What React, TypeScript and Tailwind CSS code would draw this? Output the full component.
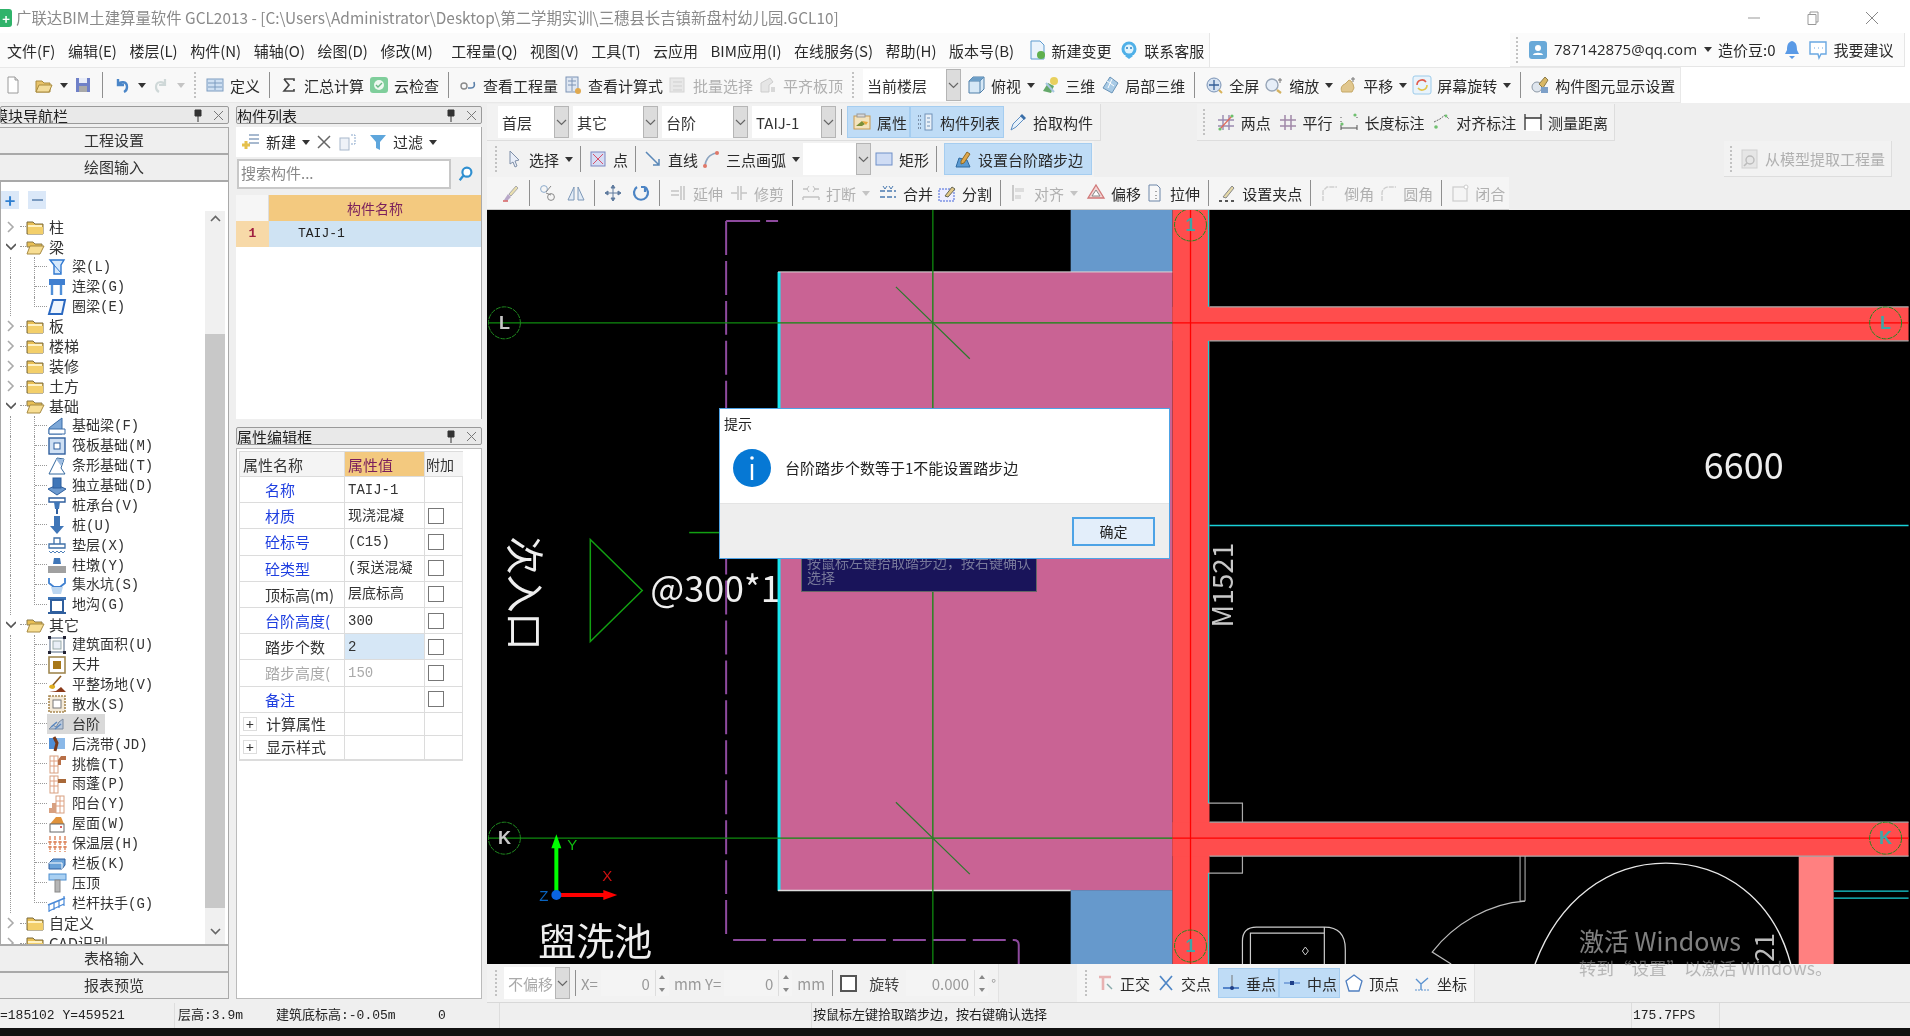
import type { ReactNode } from "react";

const cjk = { fontFamily: '"Noto Sans CJK SC", "Noto Sans", sans-serif' };
const mono = { fontFamily: '"Liberation Mono", "Noto Sans CJK SC", monospace' };

const icons: Record<string, ReactNode> = {
  doc: <><path d="M5 2h7l3 3v13H5z" fill="#fff" stroke="#9a9a9a" /><path d="M12 2v3h3" fill="#ddd" stroke="#9a9a9a" /></>,
  open: <><path d="M2 6h6l2 2h6v9H2z" fill="#e8c36a" stroke="#a98a3c" /><path d="M2 17l3-7h13l-3 7z" fill="#f3dc9a" stroke="#a98a3c" /></>,
  save: <><rect x="3" y="3" width="14" height="14" fill="#6f80c8" /><rect x="6" y="3" width="8" height="5" fill="#e9edf8" /><rect x="6" y="11" width="8" height="6" fill="#a9a9a9" /></>,
  undo: <path d="M6 4v6h6M6 10c2-4 9-4 9 2 0 2-1 4-3 5" fill="none" stroke="#4b86c8" strokeWidth="2.4" />,
  redo: <path d="M14 4v6H8M14 10c-2-4-9-4-9 2 0 2 1 4 3 5" fill="none" stroke="#cfd8d8" strokeWidth="2.2" />,
  def: <><rect x="2" y="4" width="16" height="12" fill="#cfe0f2" stroke="#7d9cc0" /><path d="M3 8h14M3 12h14M10 5v10" stroke="#7d9cc0" /></>,
  sum: <path d="M5 4h10v2M5 4l5 6-5 6h10v-2" fill="none" stroke="#444" strokeWidth="1.6" />,
  cloud: <><rect x="1" y="2" width="18" height="16" rx="3" fill="#7fce9b" /><circle cx="10" cy="10" r="5" fill="#eef8f0" /><path d="M7 10l2 2 4-4" fill="none" stroke="#6bb985" strokeWidth="1.4" /></>,
  look: <><circle cx="6" cy="11" r="3" fill="none" stroke="#8a8a8a" strokeWidth="1.4" /><path d="M13 13c3 0 4-2 3-6M10 13h3" fill="none" stroke="#5a7fa8" strokeWidth="1.6" /></>,
  calc: <><rect x="3" y="2" width="12" height="15" fill="#dfe7f2" stroke="#7d93b5" /><path d="M5 6h8M5 10h8M9 3v13" stroke="#7d93b5" /><circle cx="15" cy="16" r="3" fill="#e0a94f" /></>,
  batch: <><rect x="2" y="3" width="14" height="14" fill="#e8e8e8" stroke="#d4d4d4" /><path d="M5 7h9M5 11h9M5 15h9" stroke="#cfcfcf" /></>,
  flat: <><path d="M3 17V8l9-5 3 4-4 3v7z" fill="#e6e6e6" stroke="#cdcdcd" /><path d="M13 17v-5h4v5z" fill="#d8d8d8" /></>,
  top: <><path d="M3 6l4-4h11v12l-4 4H3z" fill="#d6e8f6" stroke="#4f7ea8" /><path d="M3 6h11v12M14 6l4-4" fill="none" stroke="#4f7ea8" /><path d="M3 6l4-4h11l-4 4z" fill="#6e9fc7" /></>,
  three: <><path d="M3 16l5-8 6 3-3 7z" fill="#64a86a" /><circle cx="14" cy="6" r="4" fill="#e8d05e" /><path d="M6 8l8 9" stroke="#a7c7e2" strokeWidth="2" /></>,
  part: <><path d="M10 2l8 6-6 10-9-5z" fill="#a9cbe6" stroke="#6a94b8" /><path d="M7 6l7 5M12 4l-4 9" stroke="#fff" /></>,
  full: <><circle cx="10" cy="10" r="7" fill="#d5e2f2" stroke="#7a93b5" /><path d="M10 5v10M5 10h10" stroke="#345f98" strokeWidth="1.3" /><path d="M15 15l3 3" stroke="#d9b35a" strokeWidth="2" /></>,
  zoom: <><circle cx="8" cy="10" r="6" fill="#e6eef8" stroke="#98a6b8" strokeWidth="1.4" /><path d="M13 15l4 3" stroke="#d3b15f" strokeWidth="2.2" /><path d="M16 3v5M14 5h4" stroke="#777" /></>,
  pan: <><path d="M4 17c-2-4 0-7 3-8l4-4 2 1 2 3 1 4-2 4z" fill="#e1c78e" stroke="#c5a866" /><path d="M15 2v5M13 4h4" stroke="#777" /></>,
  rot: <><rect x="1" y="1" width="18" height="18" rx="2" fill="#e9f3fb" stroke="#9ccbea" /><path d="M5 10a5 5 0 0 1 9-3" fill="none" stroke="#e05a4a" strokeWidth="1.6" /><path d="M15 10a5 5 0 0 1-9 3" fill="none" stroke="#e3c44a" strokeWidth="1.6" /></>,
  disp: <><circle cx="7" cy="12" r="5" fill="#dfe6ee" stroke="#8c98a6" /><path d="M9 9l6-7 3 3-5 8z" fill="#d8b765" stroke="#8a7a4a" /><rect x="11" y="12" width="7" height="6" fill="#7da0c8" /></>,
  attr: <><rect x="2" y="4" width="16" height="13" fill="#f3e3bd" stroke="#c79a55" /><path d="M4 14l6-5 3 3-3 2h-6z" fill="#7b8f38" /><path d="M10 9l6 1-2 3z" fill="#e8a83c" /><rect x="5" y="2" width="8" height="3" fill="#d9d9d9" stroke="#999" /></>,
  list: <><rect x="10" y="2" width="7" height="16" fill="#e8f0f8" stroke="#7191b8" /><path d="M12 6h3M12 10h3M12 14h3" stroke="#7191b8" /><path d="M3 4h3M3 8h3M3 12h3M3 16h3" stroke="#7b8fa8" strokeDasharray="1 1" strokeWidth="2" /></>,
  pick: <><path d="M3 18l2-6 8-8 3 3-8 8z" fill="#e7f1fa" stroke="#5e8ec2" /><path d="M12 4l2-2 4 4-2 2z" fill="#3a6ea8" /></>,
  two: <><path d="M7 3v15M13 3v15M2 8h16M2 14h16" stroke="#9a8ab0" strokeWidth="1.4" /><path d="M4 17L16 4" stroke="#e06a5a" strokeWidth="1.2" /><circle cx="4" cy="17" r="1.6" fill="#6cc06c" /><circle cx="16" cy="4" r="1.6" fill="#6cc06c" /></>,
  para: <path d="M7 3v15M13 3v15M2 8h16M2 14h16" stroke="#a088a8" strokeWidth="1.5" />,
  len: <><path d="M2 16h16M2 13v5M18 13v5" stroke="#555" /><path d="M2 9v1M2 5v1M18 5v1" stroke="#555" /><circle cx="16" cy="3" r="1.6" fill="#70c070" /><circle cx="3" cy="12" r="1.6" fill="#70c070" /></>,
  align: <><path d="M3 10l6-3 5-4 4 4" fill="none" stroke="#666" strokeDasharray="2 1" /><circle cx="5" cy="15" r="1.8" fill="#70c070" /><circle cx="15" cy="4" r="1.4" fill="#70c070" /></>,
  meas: <><rect x="3" y="6" width="15" height="13" fill="#fff" /><path d="M2 2v16M18 2v16M2 6h16" stroke="#333" strokeWidth="1.3" /></>,
  model: <><rect x="2" y="1" width="15" height="18" fill="#e6e6e6" stroke="#d0d0d0" /><circle cx="10" cy="11" r="4" fill="none" stroke="#bcbcbc" strokeWidth="1.4" /><path d="M7 14l-3 3" stroke="#bcbcbc" strokeWidth="1.6" /></>,
  cursor: <path d="M6 2l9 9-4 1 2 5-2 1-2-5-3 2z" fill="#e9eef8" stroke="#7f8fa8" />,
  point: <><rect x="3" y="3" width="14" height="14" fill="#d5dcf4" stroke="#7a86c0" /><path d="M5 5l10 10M15 5L5 15" stroke="#d8506a" /></>,
  line: <path d="M3 3l13 13M16 10v6h-6" fill="none" stroke="#5a88b8" strokeWidth="1.5" />,
  arc: <><path d="M4 18c0-7 4-13 12-14" fill="none" stroke="#8da5c0" strokeWidth="1.6" /><circle cx="16" cy="4" r="2" fill="#e07868" /><circle cx="4" cy="17" r="2" fill="#e07868" /></>,
  rect: <rect x="2" y="4" width="16" height="12" fill="#cfdcf4" stroke="#6f8fc8" />,
  step: <><path d="M3 18l3-9 8 2 3 7z" fill="#5a9ad2" stroke="#2e6aa0" /><path d="M8 12l6-9 3 2-6 9-3 1z" fill="#e0a74a" stroke="#8a6a2a" /></>,
  brush: <><path d="M3 17l4-6 3 3-4 4z" fill="#b8a8c8" /><path d="M8 11l7-8 2 2-7 8z" fill="#eadfae" stroke="#aaa" /><path d="M2 18h5" stroke="#d86a6a" strokeWidth="1.6" /></>,
  copy: <><circle cx="6" cy="6" r="3.4" fill="none" stroke="#8eaccc" /><circle cx="13" cy="14" r="3.4" fill="none" stroke="#8a8a8a" /><path d="M8 9l5-6M8 10l5 2" stroke="#888" /></>,
  mirror: <><path d="M8 4v13H2zM12 4v13h6z" fill="#e3ecf6" stroke="#7d98b8" /></>,
  move: <path d="M10 2v16M2 10h16M10 2L8 5h4zM10 18l-2-3h4zM2 10l3-2v4zM18 10l-3-2v4z" fill="#5f7b9e" stroke="#5f7b9e" />,
  rotate: <path d="M14 4a7 7 0 1 1-8 0M14 4v5M14 4l-4 0" fill="none" stroke="#4c84c4" strokeWidth="2.2" />,
  ext: <path d="M3 8h8M3 12h8M13 3v14M16 3v14" stroke="#c4c4c4" strokeWidth="1.5" />,
  trim: <path d="M2 10h6M12 10h6M9 3v14M12 3v14" stroke="#c4c4c4" strokeWidth="1.5" />,
  brk: <><path d="M2 6h5M13 6h5M2 14h16M2 14v3M18 14v3" stroke="#c2c2c2" strokeWidth="1.4" /><path d="M8 3l-2 3 2 3M12 3l2 3-2 3" fill="none" stroke="#c2c2c2" /></>,
  merge: <><path d="M2 8h16M2 14h16" stroke="#4a7ab0" strokeWidth="1.4" strokeDasharray="5 2" /><path d="M5 3l2 3 2-3M11 3l2 3 2-3" fill="none" stroke="#4a7ab0" /></>,
  split: <><rect x="2" y="6" width="15" height="12" fill="#eef" stroke="#4466d8" strokeDasharray="2 1" /><path d="M8 13l7-9 3 2-7 8z" fill="#e2c886" stroke="#665" /></>,
  alignL: <><path d="M4 2v16" stroke="#bbb" strokeWidth="1.5" /><rect x="6" y="5" width="9" height="4" fill="#ddd" /><rect x="6" y="12" width="6" height="4" fill="#ddd" /></>,
  offset: <><path d="M10 2l8 13H2z" fill="#f3d5d5" stroke="#d07878" strokeWidth="1.3" /><path d="M10 7l4 6H6z" fill="#fff" stroke="#888" /></>,
  stretch: <><path d="M4 2h8l3 3v13H4z" fill="#f8f8f8" stroke="#6d86a8" /><path d="M11 8v1M11 12v1M11 15v1" stroke="#555" /></>,
  grip: <><path d="M2 18h3M8 18h3M14 18h3" stroke="#555" strokeWidth="1.8" /><path d="M6 14L15 3l2 2-8 10z" fill="#e5d9a8" stroke="#888" /></>,
  chamfer: <path d="M4 18V8l4-4h10" fill="none" stroke="#cfcfcf" strokeWidth="1.4" strokeDasharray="5 1" />,
  round: <path d="M4 18V10c0-3 3-6 6-6h8" fill="none" stroke="#cfcfcf" strokeWidth="1.4" strokeDasharray="5 1" />,
  close: <><rect x="3" y="4" width="14" height="14" fill="none" stroke="#cfcfcf" strokeWidth="1.3" /><circle cx="16" cy="4" r="2" fill="#fff" stroke="#ccc" /></>,
  ortho: <><path d="M4 4h12M8 4v13" stroke="#e8b2b2" strokeWidth="2.6" /><path d="M12 11l5 5" stroke="#8aa" strokeWidth="1.4" /></>,
  cross: <path d="M4 3l12 14M16 3L4 17" stroke="#4f86c6" strokeWidth="1.7" />,
  perp: <><path d="M2 15h16" stroke="#3a6fc0" strokeWidth="1.6" /><path d="M11 2v13" stroke="#777" /><circle cx="11" cy="15" r="2" fill="#1f3f88" /></>,
  mid: <><path d="M2 10h16" stroke="#6f9ad8" strokeWidth="1.6" /><rect x="8" y="8" width="4" height="4" fill="#1f3f88" /></>,
  vert: <path d="M10 2l8 6-3 10H5L2 8z" fill="#fff" stroke="#4f7fc0" strokeWidth="1.3" />,
  coord: <><path d="M9 17v-6L4 6M9 11l7-6" fill="none" stroke="#5a92d0" strokeWidth="1.4" /><path d="M3 17h14" stroke="#5a92d0" strokeDasharray="2 1" /></>,
  addc: <><path d="M8 3h10M8 7h10M8 11h10" stroke="#8aa2c0" strokeWidth="1.3" /><path d="M5 9v8M1 13h8" stroke="#e5c04c" strokeWidth="3" /></>,
  copyc: <><rect x="2" y="6" width="9" height="12" fill="#eef2f8" stroke="#a8b8cc" /><path d="M13 3h4v9h-4" fill="none" stroke="#8aa8cc" strokeDasharray="2 1" /></>,
  filter: <path d="M2 3h16l-6 7v8l-4-2v-6z" fill="#5ea6dc" />,
  search: <><circle cx="11" cy="8" r="5" fill="#fff" stroke="#2f8fd0" strokeWidth="2.4" /><path d="M7 12l-4 5" stroke="#2f8fd0" strokeWidth="2.6" /></>,
  newdoc: <><path d="M4 1h9l4 4v14H4z" fill="#eaf3fb" stroke="#5d9bd0" /><circle cx="14" cy="15" r="4" fill="#5fb04e" /></>,
  service: <><circle cx="10" cy="9" r="7.5" fill="#4fb0e8" /><circle cx="10" cy="9" r="4.5" fill="#dff3fd" /><circle cx="8" cy="8" r="1" fill="#2a80c0" /><circle cx="12" cy="8" r="1" fill="#2a80c0" /><path d="M6 16l4 3 4-3" fill="#4fb0e8" /></>,
  user: <><rect x="1" y="1" width="18" height="18" rx="3" fill="#69a9d8" /><circle cx="10" cy="8" r="3" fill="#fff" /><path d="M5 15c0-3 10-3 10 0z" fill="#fff" /></>,
  bell: <path d="M10 1c-4 1-5 4-5 9l-2 4h14l-2-4c0-5-1-8-5-9zM7 16h6l-3 3z" fill="#5a9ae6" />,
  talk: <><path d="M2 2h16v12H13l-2 4-1-4H2z" fill="#fff" stroke="#6aa8e2" strokeWidth="1.4" /><path d="M6 8h1M10 8h1M14 8h1" stroke="#6aa8e2" /></>,
  folder: <><path d="M2 5h6l2 2h8v10H2z" fill="#e8bf55" stroke="#7b6a3c" /><path d="M3 10h15v7H3z" fill="#f3cf6a" /><path d="M3 8h14v2H3z" fill="#fff2c4" /></>,
  folderOpen: <><path d="M2 5h6l2 2h7v3H2z" fill="#e8bf55" stroke="#8b7a4a" /><path d="M2 17l3-8h14l-4 8z" fill="#f7dd92" stroke="#a68a42" /></>,
  b1: <><path d="M3 3h14l-3 5v9H7V8z" fill="#d5e8fb" stroke="#2f78d0" strokeWidth="1.4" /><path d="M7 8l7 8" stroke="#2f78d0" /></>,
  b2: <><rect x="2" y="2" width="16" height="6" fill="#3f7fd0" /><path d="M5 8v10M14 8v10" stroke="#4f8fd8" strokeWidth="2.4" /></>,
  b3: <path d="M6 3h12l-3 14H2z" fill="#eef5fd" stroke="#2a68c0" strokeWidth="2" />,
  b4: <><path d="M2 18v-6l5-4 8-6v16z" fill="#7da8d8" stroke="#3a6ca8" /><path d="M2 13h16v5H2z" fill="#fff" stroke="#3a6ca8" /></>,
  b5: <><rect x="2" y="2" width="16" height="16" fill="#cfe0f4" stroke="#2f5f9e" strokeWidth="1.4" /><rect x="7" y="7" width="6" height="6" fill="#fff" stroke="#2f5f9e" /></>,
  b6: <><path d="M2 18l3-6 5-10 7 1-3 9 4 6z" fill="#fff" stroke="#34689e" /><path d="M9 3l8 0-3 7z" fill="#9cbbe0" /></>,
  b7: <><path d="M1 13l9-4 9 4-9 6z" fill="#6c9ad0" stroke="#2f5f9e" /><rect x="6" y="2" width="8" height="10" fill="#3f76b8" stroke="#2f5f9e" /></>,
  b8: <><path d="M2 3h16v4H2z" fill="#fff" stroke="#2f5f9e" strokeWidth="1.4" /><path d="M7 7h6l-1 7H8z" fill="#3f76b8" /><path d="M10 14v5" stroke="#2f5f9e" strokeWidth="2" /></>,
  b9: <><rect x="7" y="1" width="6" height="10" fill="#3f76b8" /><path d="M3 11h14l-7 8z" fill="#3f76b8" /></>,
  b10: <><path d="M7 3h6v6H7zM2 9h16v4H2z" fill="#fff" stroke="#3f70a8" strokeWidth="1.3" /><path d="M2 16l2 2 2-2 2 2 2-2 2 2 2-2 2 2 2-2" fill="none" stroke="#4f80b8" /></>,
  b11: <><path d="M7 3h6l1 6H6z" fill="#3f76b8" /><rect x="1" y="11" width="18" height="7" fill="#a0a0a0" /></>,
  b12: <><path d="M2 3v5l5 4h6l5-4V3" fill="none" stroke="#3f80d0" strokeWidth="1.8" /><path d="M4 12h12l-2 7H6z" fill="#bcd6f0" /></>,
  b13: <><rect x="1" y="2" width="18" height="3" fill="#3f76b8" /><rect x="4" y="5" width="12" height="12" fill="#fff" stroke="#2f5f9e" strokeWidth="2" /><rect x="1" y="17" width="18" height="2" fill="#2f5f9e" /></>,
  c1: <><rect x="3" y="3" width="14" height="14" fill="#fff" stroke="#7a8aa0" strokeWidth="1.3" /><rect x="6" y="6" width="8" height="8" fill="#e8eef6" stroke="#9aa" /><rect x="1" y="1" width="3" height="3" fill="#223" /><rect x="16" y="1" width="3" height="3" fill="#223" /><rect x="1" y="16" width="3" height="3" fill="#223" /><rect x="16" y="16" width="3" height="3" fill="#223" /></>,
  c2: <><rect x="2" y="2" width="16" height="16" fill="#fff" stroke="#a08850" strokeWidth="1.6" /><rect x="6" y="6" width="8" height="8" fill="#a87818" /></>,
  c3: <><path d="M2 13c1-3 5-3 6-1s-3 5-6 1z" fill="#e0b020" /><path d="M6 11l8-9" stroke="#8a5a20" strokeWidth="1.6" /><path d="M9 17l5-4 5 5H2z" fill="#8a3a1a" /></>,
  c4: <><rect x="2" y="2" width="16" height="16" fill="#f4ead8" stroke="#a88850" strokeWidth="1.6" strokeDasharray="2 1" /><rect x="6" y="6" width="8" height="8" fill="#fff" stroke="#777" /></>,
  c5: <><path d="M2 15l4-4 3 2 3-5 4-3v10H2z" fill="#b8c8dc" stroke="#7a8aa0" /><path d="M4 13l6-5M8 15l6-5" stroke="#5a88c0" strokeWidth="1.5" /></>,
  c6: <><rect x="2" y="4" width="8" height="11" fill="#4f8fd8" /><rect x="10" y="4" width="8" height="11" fill="#8ab8e8" /><path d="M7 3l3 6-2 8" stroke="#7a3a1a" strokeWidth="3" fill="none" /></>,
  c7: <><rect x="3" y="2" width="8" height="17" fill="#fff" stroke="#d8a080" /><path d="M3 7h8M3 12h8M7 2v17" stroke="#e0a080" /><path d="M11 6l3-4h5v4h-5v5h-3z" fill="#b87048" /></>,
  c8: <><rect x="3" y="2" width="8" height="17" fill="#fff" stroke="#d8a080" /><path d="M3 7h8M3 12h8M7 2v17" stroke="#e0a080" /><rect x="11" y="5" width="8" height="4" fill="#a86838" /></>,
  c9: <><rect x="9" y="2" width="8" height="17" fill="#fff" stroke="#d8a080" /><path d="M9 7h8M9 12h8M13 2v17" stroke="#e0a080" /><path d="M2 14h7v5H2zM5 9h4v5H5z" fill="#d8a080" /></>,
  c10: <><path d="M3 10l6-7h5l3 7z" fill="#e0923a" /><rect x="3" y="10" width="14" height="8" fill="#fff" stroke="#666" /><circle cx="14" cy="13" r="1" fill="#c33" /></>,
  c11: <path d="M3 2v16M8 2v16M13 2v16M18 2v16M1 8h19M1 13h19" stroke="#d87040" strokeWidth="1.2" strokeDasharray="4 1" fill="none" />,
  c12: <><path d="M2 10l4-4h12v6l-3 4H2z" fill="#6aa2d8" stroke="#2f5f9e" /><path d="M2 10h13v6" fill="none" stroke="#fff" /></>,
  c13: <><rect x="2" y="1" width="17" height="6" fill="#a9d0f2" stroke="#4f8fd0" /><rect x="8" y="7" width="5" height="12" fill="#b5b5b5" stroke="#888" /></>,
  c14: <><path d="M1 12l17-7" stroke="#4a8ad8" strokeWidth="1.6" /><path d="M2 19v-7M7 17V9M12 15V7M17 13V3M2 18l15-7" stroke="#4a8ad8" strokeWidth="1.2" fill="none" /></>,
};

function Ic({ n, s = 20 }: { n: string; s?: number }) {
  return (
    <svg viewBox="0 0 20 20" width={s} height={s} className="shrink-0">
      {icons[n]}
    </svg>
  );
}

function Caret({ dim }: { dim?: boolean }) {
  return <span className={`ml-[1px] w-0 h-0 border-x-[4px] border-x-transparent border-t-[5px] ${dim ? "border-t-[#c4c4c4]" : "border-t-[#333]"}`} />;
}

function Sep() {
  return <div className="w-px h-[26px] bg-[#8f8f8f] shrink-0 mx-[4px]" />;
}

function Grip() {
  return <div className="w-0 h-[26px] border-l-2 border-dotted border-[#c2c2c2] shrink-0 mx-[4px]" />;
}

function Btn({ i, t, caret, on, dim, className = "" }: { i: string; t?: string; caret?: boolean; on?: boolean; dim?: boolean; className?: string }) {
  return (
    <div className={`flex items-center gap-[5px] h-[30px] shrink-0 whitespace-nowrap ${on ? "bg-[#bfdcf6] border border-[#a5cdf0]" : ""} ${dim ? "text-[#b0b0b0]" : "text-[#2a2a2a]"} ${className}`}>
      <Ic n={i} />
      {t && <span>{t}</span>}
      {caret && <Caret dim={dim} />}
    </div>
  );
}

function Combo({ t, w, dim }: { t?: string; w: string; dim?: boolean }) {
  return (
    <div className={`flex items-center h-[32px] bg-white shrink-0 pl-[4px] ${w}`}>
      <span className={`flex-1 ${dim ? "text-[#aaa]" : "text-[#333]"}`}>{t}</span>
      <span className="w-[15px] h-[32px] bg-[#dcdcdc] border border-[#b5b5b5] flex items-center justify-center">
        <svg width="11" height="7" viewBox="0 0 11 7"><path d="M1 1l4.5 4.5L10 1" fill="none" stroke="#666" strokeWidth="1.2" /></svg>
      </span>
    </div>
  );
}

function Panel({ t, clip }: { t: string; clip?: boolean }) {
  return (
    <div className="flex items-center h-[18px] bg-[#e9e9e9] border border-[#9a9a9a] rounded-[2px] text-[15px] leading-none text-[#222] overflow-hidden shrink-0">
      <span className={`flex-1 whitespace-nowrap ${clip ? "-ml-[8px]" : ""}`}>{t}</span>
      <svg width="10" height="13" viewBox="0 0 10 13" className="mr-[10px]"><path d="M2 1h6v6H2zM5 7v6" fill="#333" stroke="#333" /></svg>
      <svg width="11" height="11" viewBox="0 0 11 11" className="mr-[4px]"><path d="M1 1l9 9M10 1l-9 9" stroke="#777" /></svg>
    </div>
  );
}

function NavButton({ t }: { t: string }) {
  return <div className="h-[27px] shrink-0 bg-[#efefef] border-y border-r border-[#a9a9a9] flex items-center justify-center text-[15px] text-[#333]">{t}</div>;
}

type Row = { t: string; i?: string; kind?: "closed" | "open"; last?: boolean; sel?: boolean };

const tree: Row[] = [
  { t: "柱", kind: "closed" },
  { t: "梁", kind: "open" },
  { t: "梁(L)", i: "b1" },
  { t: "连梁(G)", i: "b2" },
  { t: "圈梁(E)", i: "b3", last: true },
  { t: "板", kind: "closed" },
  { t: "楼梯", kind: "closed" },
  { t: "装修", kind: "closed" },
  { t: "土方", kind: "closed" },
  { t: "基础", kind: "open" },
  { t: "基础梁(F)", i: "b4" },
  { t: "筏板基础(M)", i: "b5" },
  { t: "条形基础(T)", i: "b6" },
  { t: "独立基础(D)", i: "b7" },
  { t: "桩承台(V)", i: "b8" },
  { t: "桩(U)", i: "b9" },
  { t: "垫层(X)", i: "b10" },
  { t: "柱墩(Y)", i: "b11" },
  { t: "集水坑(S)", i: "b12" },
  { t: "地沟(G)", i: "b13", last: true },
  { t: "其它", kind: "open" },
  { t: "建筑面积(U)", i: "c1" },
  { t: "天井", i: "c2" },
  { t: "平整场地(V)", i: "c3" },
  { t: "散水(S)", i: "c4" },
  { t: "台阶", i: "c5", sel: true },
  { t: "后浇带(JD)", i: "c6" },
  { t: "挑檐(T)", i: "c7" },
  { t: "雨蓬(P)", i: "c8" },
  { t: "阳台(Y)", i: "c9" },
  { t: "屋面(W)", i: "c10" },
  { t: "保温层(H)", i: "c11" },
  { t: "栏板(K)", i: "c12" },
  { t: "压顶", i: "c13" },
  { t: "栏杆扶手(G)", i: "c14", last: true },
  { t: "自定义", kind: "closed" },
  { t: "CAD识别", kind: "closed" },
];

function TreeRow({ r }: { r: Row }) {
  if (r.kind) {
    return (
      <div className="flex items-center h-[19.9px] shrink-0">
        <svg width="10" height="12" viewBox="0 0 10 12" className="ml-[5px] shrink-0">
          {r.kind === "closed" ? <path d="M2 1l5 5-5 5" fill="none" stroke="#aaa" strokeWidth="1.6" /> : <path d="M0 3l5 5 5-5" fill="none" stroke="#555" strokeWidth="1.6" />}
        </svg>
        <div className="w-[6px] ml-[4px] border-t border-dotted border-[#999]" />
        <div className="ml-[-1px]"><Ic n={r.kind === "closed" ? "folder" : "folderOpen"} /></div>
        <span className="ml-[4px] text-[15px] text-[#333]">{r.t}</span>
      </div>
    );
  }
  return (
    <div className="flex items-center h-[19.9px] shrink-0 pl-[9px]">
      <div className="w-[24px] h-full border-l border-dotted border-[#999] shrink-0" />
      {r.last ? (
        <div className="w-[13px] h-full shrink-0"><div className="h-1/2 border-l border-b border-dotted border-[#999]" /></div>
      ) : (
        <div className="w-[13px] h-full border-l border-dotted border-[#999] shrink-0"><div className="h-1/2 border-b border-dotted border-[#999]" /></div>
      )}
      <div className={`flex items-center h-full whitespace-nowrap ${r.sel ? "bg-[#d9d9d9]" : ""}`}>
        <Ic n={r.i!} />
        <span className="ml-[5px] pr-[5px] pt-[2px] text-[14px] text-[#333]" style={mono}>{r.t}</span>
      </div>
    </div>
  );
}

function LeftNav() {
  return (
    <div className="w-[231px] shrink-0 flex flex-col pt-[3px] pr-[2px]">
      <Panel t="模块导航栏" clip />
      <div className="h-[3px]" />
      <NavButton t="工程设置" />
      <NavButton t="绘图输入" />
      <div className="flex-1 min-h-0 flex flex-col bg-white border border-[#a9a9a9] overflow-hidden">
        <div className="h-[29px] shrink-0 flex items-center gap-[9px] pt-[6px]">
          <span className="w-[18px] h-[18px] bg-[#dbe8f8] flex items-center justify-center text-[#2f7fd0] font-bold text-[18px] leading-none">+</span>
          <span className="w-[18px] h-[18px] bg-[#dbe8f8] flex items-center justify-center"><span className="w-[11px] h-[2px] bg-[#7a9ac0]" /></span>
        </div>
        <div className="flex-1 min-h-0 flex">
          <div className="flex-1 min-w-0 pt-[6px] overflow-hidden flex flex-col">
            {tree.map((r) => <TreeRow key={r.t} r={r} />)}
          </div>
          <div className="w-[20px] shrink-0 mr-[3px] bg-[#f0f0f0] flex flex-col">
            <div className="h-[123px] shrink-0 pt-[4px] flex justify-center">
              <svg width="11" height="7" viewBox="0 0 11 7"><path d="M1 6l4.500-4.500L10 6" fill="none" stroke="#666" strokeWidth="1.6" /></svg>
            </div>
            <div className="flex-1 bg-[#c8c8c8]" />
            <div className="h-[36px] shrink-0 pt-[20px] flex justify-center">
              <svg width="11" height="7" viewBox="0 0 11 7"><path d="M1 1l4.500 4.500L10 1" fill="none" stroke="#666" strokeWidth="1.6" /></svg>
            </div>
          </div>
        </div>
      </div>
      <NavButton t="表格输入" />
      <NavButton t="报表预览" />
      <div className="h-[4px]" />
    </div>
  );
}

const props = [
  { n: "名称", v: "TAIJ-1", c: "text-[#1f3fe0]", noBox: true },
  { n: "材质", v: "现浇混凝", c: "text-[#1f3fe0]" },
  { n: "砼标号", v: "(C15)", c: "text-[#1f3fe0]" },
  { n: "砼类型", v: "(泵送混凝", c: "text-[#1f3fe0]" },
  { n: "顶标高(m)", v: "层底标高", c: "text-[#333]" },
  { n: "台阶高度(", v: "300", c: "text-[#1f3fe0]" },
  { n: "踏步个数", v: "2", c: "text-[#333]", sel: true },
  { n: "踏步高度(", v: "150", c: "text-[#aaa]", gray: true },
  { n: "备注", v: "", c: "text-[#1f3fe0]" },
];

function PropRow({ p }: { p: (typeof props)[number] }) {
  return (
    <div className="grid grid-cols-[105px_80px_38px] h-[26.2px] border-b border-[#dcdcdc] text-[14px] leading-none">
      <div className={`flex items-center pl-[25px] border-r border-[#dcdcdc] whitespace-nowrap overflow-hidden text-[15px] ${p.c}`}>{p.n}</div>
      <div className={`flex items-center pl-[3px] border-r border-[#dcdcdc] whitespace-nowrap overflow-hidden ${p.sel ? "bg-[#d6e7f6]" : ""} ${p.gray ? "text-[#aaa]" : "text-[#333]"}`} style={mono}>{p.v}</div>
      <div className="flex items-center pl-[3px]">{!p.noBox && <span className="w-[16px] h-[16px] border border-[#777] bg-white" />}</div>
    </div>
  );
}

function GroupRow({ t }: { t: string }) {
  return (
    <div className="grid grid-cols-[105px_80px_38px] h-[23.5px] border-b border-[#dcdcdc] text-[15px] text-[#333]">
      <div className="flex items-center pl-[3px] gap-[9px] border-r border-[#dcdcdc] whitespace-nowrap">
        <span className="w-[14px] h-[14px] border border-[#ddd] flex items-center justify-center text-[14px] leading-none">+</span>
        {t}
      </div>
      <div className="border-r border-[#dcdcdc]" />
      <div />
    </div>
  );
}

function MidPanels() {
  return (
    <div className="w-[256px] shrink-0 flex flex-col pt-[3px] pl-[5px] pr-[5px]">
      <Panel t="构件列表" />
      <div className="h-[3px]" />
      <div className="h-[292px] shrink-0 bg-white border-r border-[#aaa] flex flex-col">
        <div className="h-[30px] shrink-0 flex items-center gap-[6px] pl-[5px] text-[15px] text-[#333]">
          <Btn i="addc" t="新建" caret className="gap-[2px]" />
          <svg width="16" height="16" viewBox="0 0 16 16"><path d="M2 2l12 12M14 2L2 14" stroke="#666" strokeWidth="1.5" /></svg>
          <Ic n="copyc" />
          <Btn i="filter" t="过滤" caret className="gap-[2px] ml-[4px]" />
        </div>
        <div className="h-[33px] shrink-0 bg-[#efefef] flex items-center">
          <div className="w-[214px] h-[30px] ml-[1px] bg-white border-2 border-[#c8c8c8] flex items-center pl-[2px] text-[15px] text-[#888]">搜索构件...</div>
          <div className="flex-1 flex justify-center"><Ic n="search" s={18} /></div>
        </div>
        <div className="h-[5px] bg-[#efefef]" />
        <div className="grid grid-cols-[33px_1fr] h-[26px] shrink-0 text-[14px]">
          <div className="bg-[#f6f6f6] border-r border-[#ddd]" />
          <div className="bg-[#f3c97f] flex items-center justify-center text-[#7a1f5c]">构件名称</div>
        </div>
        <div className="grid grid-cols-[33px_1fr] h-[26px] shrink-0 text-[13px]" style={mono}>
          <div className="bg-[#f7d9a8] flex items-center justify-center text-[#a02040] font-bold">1</div>
          <div className="bg-[#cfe3f3] flex items-center pl-[29px] text-[#222]">TAIJ-1</div>
        </div>
      </div>
      <div className="h-[8px]" />
      <Panel t="属性编辑框" />
      <div className="flex-1 min-h-0 bg-white border border-[#bbb] pl-[2px] pt-[2px] mt-[3px] mb-[4px]">
        <div className="w-[224px] border border-[#dcdcdc]">
          <div className="grid grid-cols-[105px_80px_38px] h-[25px] border-b border-[#dcdcdc] text-[15px] leading-none">
            <div className="flex items-center pl-[3px] bg-[#f4f4f4] text-[#333] border-r border-[#dcdcdc]">属性名称</div>
            <div className="flex items-center pl-[3px] bg-[#f3c97f] text-[#7a1f5c] border-r border-[#dcdcdc]">属性值</div>
            <div className="flex items-center pl-[1px] bg-[#f4f4f4] text-[#333] whitespace-nowrap text-[14px]">附加</div>
          </div>
          {props.map((p) => <PropRow key={p.n} p={p} />)}
          <GroupRow t="计算属性" />
          <GroupRow t="显示样式" />
        </div>
      </div>
    </div>
  );
}

function Bubble({ x, y, t, c = "#c8c8c8" }: { x: number; y: number; t: string; c?: string }) {
  return (
    <g>
      <circle cx={x} cy={y} r="16" fill="none" stroke="#1f8a1f" strokeWidth="1" strokeDasharray="5 1" />
      <text x={x} y={y + 6} textAnchor="middle" fontSize="18" fill={c} fontFamily="Liberation Sans" fontWeight="bold">{t}</text>
    </g>
  );
}

function Drawing() {
  const white = { fontFamily: '"Noto Sans CJK SC", sans-serif', fill: "#eee" };
  return (
    <svg viewBox="488 210 1422 755" className="block w-full h-full bg-black">
      {/* text behind the slab */}
      <text x="650" y="603" fontSize="36" style={white}>@300*1</text>
      <text transform="translate(511 537) rotate(90)" fontSize="38" style={white}>次入口</text>
      <polygon points="590,540 642,591 590,642" fill="none" stroke="#12a012" strokeWidth="1.5" />
      <line x1="689" y1="533" x2="719" y2="533" stroke="#12a012" strokeWidth="1.5" />

      {/* dashed outline */}
      <path d="M726 221H778M726 221V938" fill="none" stroke="#8e4a9e" strokeWidth="2" strokeDasharray="34 6" />
      <path d="M733 941H1014Q1019 941 1019 946V965" fill="none" stroke="#8e4a9e" strokeWidth="2" strokeDasharray="33 7" />

      {/* slab and steps */}
      <rect x="1071" y="210" width="102" height="62" fill="#6699cc" />
      <rect x="1071" y="891" width="102" height="74" fill="#6699cc" />
      <rect x="778" y="272" width="395" height="619" fill="#c96394" />
      <path d="M779 272V892" stroke="#19e6f0" strokeWidth="3" />
      <path d="M778 272H1173" stroke="#ddd" strokeWidth="1" />
      <path d="M778 891.500H1071" stroke="#ddd" strokeWidth="1.5" />

      {/* walls */}
      <rect x="1173" y="210" width="37" height="755" fill="#ff4d4d" />
      <rect x="1173" y="307" width="737" height="34" fill="#ff4d4d" />
      <rect x="1173" y="823" width="737" height="34" fill="#ff4d4d" />
      <rect x="1800" y="857" width="35" height="108" fill="#ff8080" />
      <path d="M1210 307H1910M1210 341H1910M1210 823H1910M1210 857H1910" stroke="#aaa" strokeWidth="1.2" />
      <path d="M1209 210V307M1209 341V804M1209 874V965" stroke="#19d0d8" strokeWidth="1.2" />
      <path d="M1209 804H1243V823M1209 874H1243V857" fill="none" stroke="#aaa" strokeWidth="1.2" />
      <path d="M1210 526H1910" stroke="#19d0d8" strokeWidth="1.5" />
      <path d="M1835 892H1910M1835 899H1910" stroke="#19d0d8" strokeWidth="1.2" />

      {/* axis lines */}
      <path d="M933 210V965" stroke="#0f8a0f" strokeWidth="1.3" />
      <path d="M488 323H1173M488 839H1173" stroke="#0f8a0f" strokeWidth="1.3" />
      <path d="M896 287L970 359M896 803L970 875" stroke="#2c7a2c" strokeWidth="1.2" />
      <path d="M1191 210V965M1173 323H1910M1173 839H1910" stroke="#ff0000" strokeWidth="1.3" />

      {/* fixtures */}
      <path d="M1521 857V902H1526V857" fill="none" stroke="#bbb" />
      <path d="M1526 902C1490 904 1455 925 1433 953L1452 965" fill="none" stroke="#bbb" strokeWidth="1.2" />
      <path d="M1243 965V942Q1243 928 1257 928H1325Q1346 928 1346 950V965" fill="none" stroke="#ccc" strokeWidth="1.2" />
      <path d="M1251 965V934H1325V965M1325 928V934" fill="none" stroke="#ccc" strokeWidth="1.2" />
      <path d="M1306 948l3 4-3 4-3-4z" fill="none" stroke="#ccc" />
      <path d="M1536 965C1560 900 1610 864 1667 864C1725 864 1775 900 1792 965" fill="none" stroke="#e8e8e8" strokeWidth="1.4" />

      <Bubble x={504} y={323} t="L" />
      <Bubble x={504} y={839} t="K" />
      <Bubble x={1887} y={323} t="L" c="#3fa7a7" />
      <Bubble x={1887} y={839} t="K" c="#3fa7a7" />
      <Bubble x={1191} y={225} t="1" c="#3fa7a7" />
      <Bubble x={1191} y={947} t="1" c="#3fa7a7" />

      <text x="1705" y="479" fontSize="36" style={white}>6600</text>
      <text transform="translate(1234 628) rotate(-90)" fontSize="28" style={{ ...white, fill: "#c8c8c8" }}>M1521</text>
      <text x="538" y="956" fontSize="38" style={white}>盥洗池</text>
      <text transform="translate(1775 963) rotate(-90)" fontSize="26" style={{ ...white, fill: "#bbb" }}>21</text>

      {/* ucs */}
      <path d="M556 896V845" stroke="#00ff00" strokeWidth="4" />
      <path d="M556 835l-5 14h10z" fill="#00ff00" />
      <path d="M556 896H604" stroke="#ff0000" strokeWidth="4" />
      <path d="M617 896l-14-5v10z" fill="#ff0000" />
      <circle cx="556" cy="896" r="5" fill="#0a64e0" />
      <text x="567" y="851" fontSize="15" fill="#10c010" fontFamily="Liberation Sans">Y</text>
      <text x="602" y="882" fontSize="15" fill="#d01010" fontFamily="Liberation Sans">X</text>
      <text x="539" y="902" fontSize="15" fill="#0a64c0" fontFamily="Liberation Sans">Z</text>
    </svg>
  );
}

function Tools() {
  return (
    <div className="h-[107px] shrink-0 bg-[#efefef] flex flex-col text-[15px] leading-none">
      <div className="flex h-[38px] shrink-0 pt-[1px] justify-between pr-[295px]">
        <div className="flex items-center w-[614px] pl-[11px] gap-[4px] bg-[#f2f2f2] border-b border-r border-[#ddd]">
          <Combo t="首层" w="w-[71px]" />
          <Combo t="其它" w="w-[85px]" />
          <Combo t="台阶" w="w-[86px]" />
          <Combo t="TAIJ-1" w="w-[84px]" />
          <div className="w-px h-[26px] bg-[#8f8f8f] shrink-0 mx-[1px]" />
          <Btn i="attr" t="属性" on className="w-[63px] px-[4px] h-[32px] gap-[4px]" />
          <Btn i="list" t="构件列表" on className="w-[94px] px-[4px] h-[32px] gap-[3px] -ml-[4px]" />
          <Btn i="pick" t="拾取构件" className="gap-[3px]" />
        </div>
        <div className="flex items-center justify-between w-[418px] pl-[2px] pr-[6px] bg-[#f2f2f2] border-b border-r border-[#ddd]">
          <Grip />
          <Btn i="two" t="两点" />
          <Btn i="para" t="平行" />
          <Btn i="len" t="长度标注" />
          <Btn i="align" t="对齐标注" />
          <Btn i="meas" t="测量距离" />
        </div>
      </div>
      <div className="flex h-[36px] shrink-0 justify-between pr-[18px]">
        <div className="flex items-center pl-[4px] pr-[2px] gap-[3px] bg-[#f2f2f2]">
          <Grip />
          <Btn i="cursor" t="选择" caret />
          <Sep />
          <Btn i="point" t="点" />
          <Sep />
          <Btn i="line" t="直线" />
          <Btn i="arc" t="三点画弧" caret />
          <Combo w="w-[68px]" />
          <Btn i="rect" t="矩形" />
          <Sep />
          <Btn i="step" t="设置台阶踏步边" on className="px-[8px] h-[32px]" />
        </div>
        <div className="flex items-center pr-[6px] pl-[2px] gap-[4px] bg-[#f2f2f2] border-b border-r border-[#ddd]">
          <Grip />
          <Btn i="model" t="从模型提取工程量" dim />
        </div>
      </div>
      <div className="flex h-[33px] shrink-0">
        <div className="flex items-center pl-[14px] pr-[4px] gap-[4px] bg-[#f5f5f5] border-b border-[#ccc]">
          <Btn i="brush" />
          <Sep />
          <Btn i="copy" />
          <Btn i="mirror" className="ml-[4px]" />
          <Sep />
          <Btn i="move" />
          <Btn i="rotate" className="ml-[4px]" />
          <Sep />
          <Btn i="ext" t="延伸" dim />
          <Btn i="trim" t="修剪" dim className="ml-[2px]" />
          <Sep />
          <Btn i="brk" t="打断" caret dim />
          <Btn i="merge" t="合并" className="ml-[4px]" />
          <Btn i="split" t="分割" />
          <Sep />
          <Btn i="alignL" t="对齐" caret dim />
          <Btn i="offset" t="偏移" className="ml-[4px]" />
          <Btn i="stretch" t="拉伸" />
          <Sep />
          <Btn i="grip" t="设置夹点" />
          <Sep />
          <Btn i="chamfer" t="倒角" dim />
          <Btn i="round" t="圆角" dim />
          <Sep />
          <Btn i="close" t="闭合" dim />
        </div>
      </div>
    </div>
  );
}

function Spin({ v, w }: { v: string; w: string }) {
  return (
    <div className={`flex items-center h-[26px] shrink-0 ${w}`}>
      <div className="flex-1 h-full flex items-center justify-end pr-[5px] bg-[#f4f4f4] text-[#999]">{v}</div>
      <div className="w-[14px] h-full flex flex-col items-center justify-around bg-[#f4f4f4] border-l border-[#ddd]">
        <span className="w-0 h-0 border-x-[3px] border-x-transparent border-b-[4px] border-b-[#888]" />
        <span className="w-0 h-0 border-x-[3px] border-x-transparent border-t-[4px] border-t-[#888]" />
      </div>
    </div>
  );
}

function BottomBar() {
  return (
    <div className="h-[39px] shrink-0 bg-[#efefef] flex text-[15px] leading-none border-b border-[#d8d8d8]">
      <div className="w-[512px] flex items-center pl-[4px] gap-[3px] bg-[#f2f2f2] border-r border-[#e2e2e2]">
        <Grip />
        <Combo t="不偏移" w="w-[66px]" dim />
        <div className="w-px h-[26px] bg-[#8f8f8f] shrink-0 mx-[2px]" />
        <span className="text-[#999] whitespace-nowrap">X=</span>
        <Spin v="0" w="w-[68px]" />
        <span className="text-[#999] whitespace-nowrap ml-[2px]">mm Y=</span>
        <Spin v="0" w="w-[68px]" />
        <span className="text-[#999] ml-[2px]">mm</span>
        <Sep />
        <span className="w-[17px] h-[17px] border-2 border-[#555] bg-white shrink-0" />
        <span className="ml-[9px] text-[#444] whitespace-nowrap">旋转</span>
        <div className="ml-[4px]"><Spin v="0.000" w="w-[82px]" /></div>
        <span className="text-[#999] text-[13px]">°</span>
      </div>
      <div className="w-[78px] bg-[#efefef]" />
      <div className="w-[398px] flex items-center pl-[4px] gap-[4px] bg-[#f5f5f5] border-r border-[#e2e2e2]">
        <Grip />
        <Btn i="ortho" t="正交" />
        <Btn i="cross" t="交点" className="ml-[2px]" />
        <Btn i="perp" t="垂点" on className="px-[2px] h-[26px] gap-[3px] ml-[3px]" />
        <Btn i="mid" t="中点" on className="px-[2px] h-[26px] gap-[3px] ml-[-4px]" />
        <Btn i="vert" t="顶点" />
        <Btn i="coord" t="坐标" className="ml-[9px]" />
      </div>
    </div>
  );
}

function Dialog() {
  return (
    <div className="absolute left-[719px] top-[408px] w-[451px] h-[151px] bg-white border border-[#4da3e6] flex flex-col" style={cjk}>
      <div className="pl-[4px] pt-[4px] text-[14px] leading-[20px] text-[#222]">提示</div>
      <div className="flex items-center pl-[13px] h-[70px]">
        <div className="w-[38px] h-[38px] rounded-full bg-[#0678d4] flex items-center justify-center text-white">
          <svg width="6" height="26" viewBox="0 0 6 26"><circle cx="3" cy="3" r="1.800" fill="#fff" /><rect x="1.800" y="9" width="2.400" height="16" fill="#fff" /></svg>
        </div>
        <span className="ml-[14px] text-[15px] text-[#222]">台阶踏步个数等于1不能设置踏步边</span>
      </div>
      <div className="flex-1 bg-[#eeeeee] border-t border-[#e4e4e4] flex items-center justify-end pr-[14px] pt-[1px]">
        <div className="w-[83px] h-[29px] bg-[#e3eefa] border-2 border-[#4da3e6] flex items-center justify-center text-[14px] text-[#222]">确定</div>
      </div>
    </div>
  );
}

const menu = ["文件(F)", "编辑(E)", "楼层(L)", "构件(N)", "辅轴(O)", "绘图(D)", "修改(M)", "工程量(Q)", "视图(V)", "工具(T)", "云应用", "BIM应用(I)", "在线服务(S)", "帮助(H)", "版本号(B)"];

export default function App() {
  return (
    <div className="relative w-[1910px] h-[1036px] overflow-hidden bg-[#efefef] flex flex-col blur-[0.4px]" style={cjk}>
      {/* title bar */}
      <div className="h-[33px] shrink-0 bg-white flex items-center text-[15.4px] text-[#8a8a8a] whitespace-nowrap relative pt-[3px]">
        <div className="w-[12px] h-[18px] rounded-r-[3px] bg-[#2fb36a] flex items-center justify-center text-white text-[13px] font-bold leading-none">+</div>
        <span className="ml-[4px] flex-1">广联达BIM土建算量软件 GCL2013 - [C:\Users\Administrator\Desktop\第二学期实训\三穗县长吉镇新盘村幼儿园.GCL10]</span>
        <svg width="12" height="12" viewBox="0 0 12 12" className="mr-[47px]"><path d="M0 6h12" stroke="#999" /></svg>
        <svg width="12" height="14" viewBox="0 0 12 14" className="mr-[46px]"><path d="M1 3.500h8v10H1zM3 3.500V1h8v10H9" fill="none" stroke="#999" /></svg>
        <svg width="14" height="14" viewBox="0 0 14 14" className="mr-[31px]"><path d="M1 1l12 12M13 1L1 13" stroke="#888" /></svg>
      </div>

      {/* menu */}
      <div className="h-[34px] shrink-0 bg-white flex items-center text-[15px] leading-none text-[#2a2a2a] whitespace-nowrap">
        <div className="flex items-center h-full w-[1210px] shrink-0 pl-[7px] gap-[12.5px] bg-[#fbfbfb] border-r border-[#e6e6e6]">
          {menu.map((m) => <span key={m} className={m === "工程量(Q)" ? "ml-[6px]" : ""}>{m}</span>)}
          <Btn i="newdoc" t="新建变更" />
          <Btn i="service" t="联系客服" className="-ml-[5px]" />
        </div>
        <div className="w-[300px] shrink-0" />
        <div className="flex items-center h-full flex-1 mr-[5px] gap-[6px] pl-[2px] bg-[#fbfbfb] border-r border-b border-[#e6e6e6]">
          <Grip />
          <Ic n="user" />
          <span className="text-[15px]" style={{ fontFamily: '"Open Sans", "Noto Sans CJK SC", sans-serif' }}>787142875@qq.com</span>
          <Caret />
          <span>造价豆:0</span>
          <Ic n="bell" />
          <Ic n="talk" />
          <span>我要建议</span>
        </div>
      </div>

      {/* main toolbar */}
      <div className="h-[36px] shrink-0 bg-white flex text-[15px] leading-none">
        <div className="flex items-center w-[1681px] pl-[3px] gap-[5px] bg-[#f8f8f8] border-y border-r border-[#e8e8e8]">
          <Btn i="doc" />
          <Btn i="open" caret className="ml-[6px]" />
          <Btn i="save" />
          <Sep />
          <Btn i="undo" caret />
          <Btn i="redo" caret dim />
          <Grip />
          <Btn i="def" t="定义" />
          <Sep />
          <Btn i="sum" t="汇总计算" />
          <Btn i="cloud" t="云检查" />
          <Sep />
          <Btn i="look" t="查看工程量" />
          <Btn i="calc" t="查看计算式" />
          <Btn i="batch" t="批量选择" dim />
          <Btn i="flat" t="平齐板顶" dim />
          <Grip />
          <Combo t="当前楼层" w="w-[98px]" />
          <Btn i="top" t="俯视" caret />
          <Btn i="three" t="三维" />
          <Btn i="part" t="局部三维" />
          <Sep />
          <Btn i="full" t="全屏" />
          <Btn i="zoom" t="缩放" caret />
          <Btn i="pan" t="平移" caret />
          <Btn i="rot" t="屏幕旋转" caret />
          <Sep />
          <Btn i="disp" t="构件图元显示设置" />
        </div>
      </div>

      {/* body */}
      <div className="flex-1 min-h-0 flex">
        <LeftNav />
        <MidPanels />
        <div className="flex-1 min-w-0 flex flex-col">
          <Tools />
          <div className="flex-1 min-h-0"><Drawing /></div>
          <BottomBar />
        </div>
      </div>

      {/* status */}
      <div className="h-[25px] shrink-0 bg-[#efefef] flex items-center text-[13px] text-[#222] whitespace-nowrap" style={mono}>
        <div className="w-[175px] border-r border-[#ddd] h-full flex items-center">=185102 Y=459521</div>
        <div className="w-[101px] pl-[3px] h-full flex items-center">层高:3.9m</div>
        <div className="w-[162px] h-full flex items-center">建筑底标高:-0.05m</div>
        <div className="w-[62px] h-full flex items-center border-r border-[#ddd]">0</div>
        <div className="w-[312px] h-full border-r border-[#ddd]" />
        <div className="w-[820px] pl-[1px] h-full flex items-center border-r border-[#ddd]">按鼠标左键拾取踏步边，按右键确认选择</div>
        <div className="w-[88px] pl-[1px] h-full flex items-center border-r border-[#ddd]">175.7FPS</div>
      </div>
      <div className="h-[8px] shrink-0 bg-[#111]" />

      {/* tooltip below the message box */}
      <div className="absolute left-[801px] top-[556px] w-[236px] h-[36px] bg-[#19145a] border border-[#666] px-[5px] text-[14px] leading-[15px] text-[#77789a]" style={mono}>按鼠标左键拾取踏步边，按右键确认选择</div>
      <Dialog />

      {/* activation watermark */}
      <div className="absolute left-[1579px] top-[925px] text-[25px] leading-[30px] text-white/50 whitespace-nowrap">激活 Windows</div>
      <div className="absolute left-[1579px] top-[958px] text-[17.500px] leading-[20px] text-[#8f8f8f]/60 whitespace-nowrap">转到“设置”以激活 Windows。</div>
    </div>
  );
}
